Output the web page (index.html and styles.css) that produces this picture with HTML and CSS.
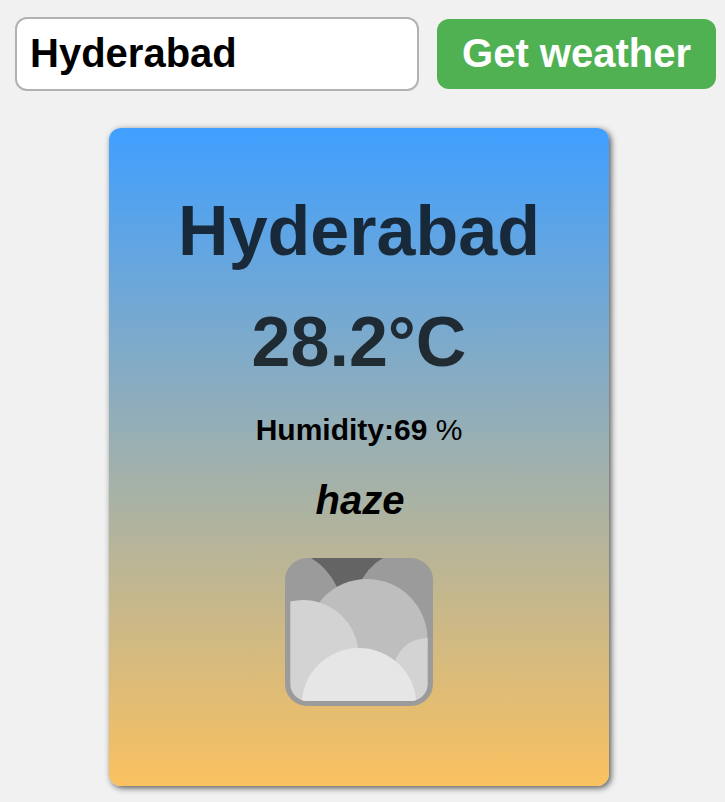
FILE: index.html
```html
<!DOCTYPE html>
<html lang="en">
<head>
<meta charset="utf-8">
<title>Weather</title>
<link rel="stylesheet" href="styles.css">
</head>
<body>
<form class="search">
  <input class="city-input" type="text" value="Hyderabad">
  <button class="submit" type="button">Get weather</button>
</form>
<main class="card">
  <h1 class="city">Hyderabad</h1>
  <p class="temp">28.2°C</p>
  <p class="humidity">Humidity:69 <span class="unit">%</span></p>
  <p class="desc">haze</p>
  <svg class="icon" viewBox="0 0 148 148">
    <defs>
      <clipPath id="outer"><rect width="148" height="148" rx="22"/></clipPath>
      <clipPath id="inner"><path d="M5.300 0H142.700V126a17 17 0 0 1-17 17H22.300a17 17 0 0 1-17-17Z"/></clipPath>
    </defs>
    <g clip-path="url(#outer)">
      <rect width="148" height="148" fill="#9b9b9b"/>
      <path d="M26 0Q43 10 52 29H73Q82 9 98 0Z" fill="#646464"/>
      <g clip-path="url(#inner)">
        <circle cx="82" cy="81.500" r="60.500" fill="#bebebe"/>
        <circle cx="142" cy="113.500" r="33.500" fill="#d3d3d3"/>
        <circle cx="18" cy="97.500" r="55.500" fill="#d3d3d3"/>
        <circle cx="74" cy="147.500" r="57.500" fill="#e6e6e6"/>
      </g>
    </g>
  </svg>
</main>
</body>
</html>
```
FILE: styles.css
```css
* { box-sizing: border-box; }
body {
  margin: 0;
  min-height: 100vh;
  background: #f1f1f1;
  font-family: "Liberation Sans", Arial, sans-serif;
  font-weight: bold;
}
.search {
  display: flex;
  align-items: center;
  gap: 18px;
  padding: 17px 9px 0 15px;
}
.city-input {
  width: 404px;
  height: 74px;
  padding: 0 13px 2px;
  border: 2px solid #b2b2b2;
  border-radius: 12px;
  background: #fff;
  color: #000;
  font: bold 40px "Liberation Sans", Arial, sans-serif;
}
.submit {
  width: 279px;
  height: 70px;
  padding: 0 0 2px;
  border: 0;
  border-radius: 12px;
  background: #4fb152;
  color: #fff;
  font: bold 40px "Liberation Sans", Arial, sans-serif;
}
.card {
  display: flex;
  flex-direction: column;
  align-items: center;
  width: 500px;
  height: 658px;
  margin: 37px 0 0 109px;
  padding-top: 63px;
  border-radius: 12px;
  background: linear-gradient(180deg, #409fff, #fac15f);
  box-shadow: 2px 2px 6px rgba(0, 0, 0, .65);
}
.city, .temp, .humidity, .desc { margin: 0; color: #000; }
.city, .temp {
  color: rgba(0, 0, 0, .75);
  font-size: 70px;
  line-height: 80px;
}
.temp { margin-top: 31px; }
.humidity { margin-top: 31px; font-size: 30px; line-height: 34px; }
.unit { font-weight: normal; }
.desc {
  margin-top: 30px;
  padding-left: 2px;
  font-size: 40px;
  line-height: 46px;
  font-style: italic;
}
.icon { width: 148px; height: 148px; margin-top: 35px; }
```
